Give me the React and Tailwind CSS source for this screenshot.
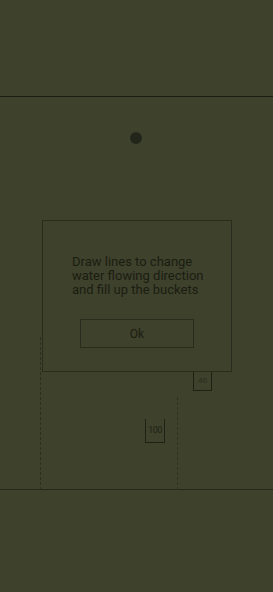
export default function App() {
    return (
        <div className="relative w-[273px] h-[592px] overflow-hidden bg-[#3e412c] font-['Roboto',sans-serif]">
            {/* top bar */}
            <div className="h-[97px] border-b border-[#1c1e12]" />

            {/* game field */}
            <div className="relative h-[393px] border-b border-[#25281a]">
                <div className="absolute left-[130px] top-[35px] w-[12px] h-[12px] rounded-full bg-[#22251a]" />

                {/* dotted flow lines */}
                <div className="absolute left-[40px] top-[240px] h-[153px] border-l border-dashed border-[#2c2f1e]" />
                <div className="absolute left-[177px] top-[300px] h-[93px] border-l border-dashed border-[#2f3221]" />

                {/* buckets */}
                <div className="absolute left-[193px] top-[274px] w-[19px] h-[20px] border-x border-b border-[#1f2114] flex items-center justify-center text-[8px] text-[#2a2c1c]">
                    40
                </div>
                <div className="absolute left-[145px] top-[322px] w-[20px] h-[24px] border-x border-b border-[#1f2114] flex items-center justify-center text-[9px] tracking-[-0.5px] text-[#1f2114]">
                    100
                </div>
            </div>

            {/* modal */}
            <div className="absolute left-[42px] top-[220px] w-[190px] h-[152px] border border-[#2a2c1d] bg-[#3e412c] flex flex-col items-center">
                <p className="mt-[34px] w-[136px] ml-[6px] text-[13px] leading-[14px] text-[#1b1d11]">
                    Draw lines to change water flowing direction and fill up the buckets
                </p>
                <button className="mt-[22px] w-[114px] h-[29px] border border-[#2a2c1d] text-[12px] text-[#1b1d11] flex items-center justify-center">
                    Ok
                </button>
            </div>
        </div>
    );
}
